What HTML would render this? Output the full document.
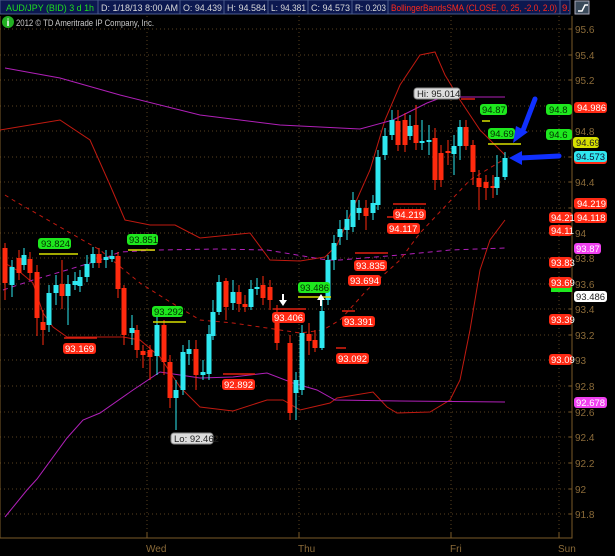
<!DOCTYPE html>
<html><head><meta charset="utf-8"><style>
html,body{margin:0;padding:0;background:#000;width:615px;height:556px;overflow:hidden}
svg{display:block;font-family:"Liberation Sans",sans-serif}
</style></head><body>
<svg width="615" height="556" viewBox="0 0 615 556" xmlns="http://www.w3.org/2000/svg">
<rect width="615" height="556" fill="#000"/>
<!-- header -->
<g font-size="9.5">
<rect x="0" y="0" width="98" height="14" fill="#0c1850" stroke="#4a5a8a" stroke-width="1"/>
<text x="6" y="11" fill="#1ee01e" textLength="88" lengthAdjust="spacingAndGlyphs">AUD/JPY (BID) 3 d 1h</text>
<rect x="98" y="0" width="82" height="14" fill="#0c1850" stroke="#4a5a8a"/>
<text x="101" y="11" fill="#d8d8d8" textLength="77" lengthAdjust="spacingAndGlyphs">D: 1/18/13 8:00 AM</text>
<rect x="180" y="0" width="44" height="14" fill="#0c1850" stroke="#4a5a8a"/>
<text x="183" y="11" fill="#d8d8d8" textLength="39" lengthAdjust="spacingAndGlyphs">O: 94.439</text>
<rect x="224" y="0" width="44" height="14" fill="#0c1850" stroke="#4a5a8a"/>
<text x="227" y="11" fill="#d8d8d8" textLength="39" lengthAdjust="spacingAndGlyphs">H: 94.584</text>
<rect x="268" y="0" width="40" height="14" fill="#0c1850" stroke="#4a5a8a"/>
<text x="271" y="11" fill="#d8d8d8" textLength="35" lengthAdjust="spacingAndGlyphs">L: 94.381</text>
<rect x="308" y="0" width="44" height="14" fill="#0c1850" stroke="#4a5a8a"/>
<text x="311" y="11" fill="#d8d8d8" textLength="39" lengthAdjust="spacingAndGlyphs">C: 94.573</text>
<rect x="352" y="0" width="36" height="14" fill="#0c1850" stroke="#4a5a8a"/>
<text x="355" y="11" fill="#d8d8d8" textLength="31" lengthAdjust="spacingAndGlyphs">R: 0.203</text>
<rect x="388" y="0" width="172" height="14" fill="#0c1850" stroke="#4a5a8a"/>
<text x="391" y="11" fill="#ff2a1a" textLength="166" lengthAdjust="spacingAndGlyphs">BollingerBandsSMA (CLOSE, 0, 25, -2.0, 2.0)</text>
<rect x="560" y="0" width="10" height="14" fill="#0c1850" stroke="#4a5a8a"/>
<text x="562" y="11" fill="#ff2a1a">9.</text>
</g>
<rect x="575" y="1" width="14" height="13" fill="#3a4a5a" stroke="#aab"/>
<path d="M578 11 L582 11 L585 5 L588 5" stroke="#fff" stroke-width="1.4" fill="none"/>
<circle cx="8" cy="22" r="6" fill="#22b022"/>
<text x="8" y="26" fill="#fff" font-size="10" font-weight="bold" text-anchor="middle">i</text>
<text x="16" y="26" fill="#c8c8c8" font-size="9" textLength="138" lengthAdjust="spacingAndGlyphs">2012 © TD Ameritrade IP Company, Inc.</text>
<!-- grid -->
<g stroke="#5a4220" stroke-width="1" stroke-dasharray="1,3">
<line x1="0" y1="29" x2="572" y2="29"/><line x1="0" y1="55" x2="572" y2="55"/><line x1="0" y1="80" x2="572" y2="80"/><line x1="0" y1="106" x2="572" y2="106"/><line x1="0" y1="131" x2="572" y2="131"/><line x1="0" y1="157" x2="572" y2="157"/><line x1="0" y1="182" x2="572" y2="182"/><line x1="0" y1="208" x2="572" y2="208"/><line x1="0" y1="233" x2="572" y2="233"/><line x1="0" y1="258" x2="572" y2="258"/><line x1="0" y1="284" x2="572" y2="284"/><line x1="0" y1="309" x2="572" y2="309"/><line x1="0" y1="335" x2="572" y2="335"/><line x1="0" y1="360" x2="572" y2="360"/><line x1="0" y1="386" x2="572" y2="386"/><line x1="0" y1="412" x2="572" y2="412"/><line x1="0" y1="437" x2="572" y2="437"/><line x1="0" y1="463" x2="572" y2="463"/><line x1="0" y1="489" x2="572" y2="489"/><line x1="0" y1="514" x2="572" y2="514"/>
<line x1="147" y1="16" x2="147" y2="538"/><line x1="299" y1="16" x2="299" y2="538"/><line x1="451" y1="16" x2="451" y2="538"/><line x1="559" y1="16" x2="559" y2="538"/>
</g>
<g stroke="#7a5a28" stroke-width="1" fill="none">
<path d="M0 16 V538 H572 V16"/>
<path d="M147 532V538M299 532V538M451 532V538M559 532V538"/>
<path d="M569 29h3M569 55h3M569 80h3M569 106h3M569 131h3M569 157h3M569 182h3M569 208h3M569 233h3M569 258h3M569 284h3M569 309h3M569 335h3M569 360h3M569 386h3M569 412h3M569 437h3M569 463h3M569 489h3M569 514h3"/>
</g>
<g fill="#8a6a38" font-size="10">
<text x="575" y="33">95.6</text><text x="575" y="59">95.4</text><text x="575" y="84">95.2</text><text x="575" y="135">94.8</text><text x="575" y="186">94.4</text><text x="575" y="237">94</text><text x="575" y="262">93.8</text><text x="575" y="288">93.6</text><text x="575" y="313">93.4</text><text x="575" y="339">93.2</text><text x="575" y="364">93</text><text x="575" y="390">92.8</text><text x="575" y="416">92.6</text><text x="575" y="441">92.4</text><text x="575" y="467">92.2</text><text x="575" y="493">92</text><text x="575" y="518">91.8</text>
<text x="146" y="552">Wed</text><text x="298" y="552">Thu</text><text x="450" y="552">Fri</text><text x="558" y="552">Sun</text>
</g>
<!-- bands -->
<g fill="none" stroke-width="1">
<path stroke="#c01a10" d="M0 130 L30 125 L60 120 L90 140 L110 185 L125 220 L150 225 L175 225 L200 238 L250 233 L270 260 L300 261 L325 257 L337 245 L350 215 L370 170 L385 120 L400 85 L420 55 L435 52 L445 75 L460 100 L480 130 L505 155"/>
<path stroke="#c01a10" d="M3 262 L20 272 L33 283 L43 313 L53 327 L67 337 L97 337 L123 337 L140 340 L160 357 L180 387 L200 407 L233 411 L267 400 L283 400 L300 410 L330 403 L337 398 L373 392 L387 407 L397 413 L430 412 L450 400 L460 380 L470 330 L480 270 L490 240 L505 220"/>
<path stroke="#b020b8" d="M5 68 L60 78 L120 95 L200 115 L280 125 L340 128 L360 129 L393 120 L427 103 L443 97 L505 97"/>
<path stroke="#b020b8" d="M5 517 L27 490 L37 479 L67 438 L83 420 L100 413 L133 390 L160 372 L200 378 L233 377 L267 373 L293 383 L317 390 L335 400 L400 401 L505 402"/>
<path stroke="#b020b8" stroke-dasharray="5,4" d="M3 290 L33 280 L67 270 L100 260 L120 252 L157 250 L217 249 L267 250 L327 260 L340 260 L400 255 L450 250 L505 248"/>
<path stroke="#c01a10" stroke-dasharray="4,4" d="M5 195 L13 200 L100 250 L140 283 L167 300 L200 320 L233 323 L267 328 L300 333 L323 330 L340 320 L367 290 L400 260 L420 233 L470 180 L503 160"/>
</g>
<!-- candles -->
<g stroke-width="1">
<path stroke="#ff2a0e" d="M5 243V300M19 250V280M30 252V280M37 265V336M43 310V345M62 260V309M99 248V268M118 252V298M124 285V345M137 325V358M143 345V368M150 345V380M164 320V375M170 355V408M196 340V390M226 278V320M239 285V312M245 295V312M263 276V305M270 280V310M277 305V350M290 335V420M309 323V355M315 330V352M366 200V230M398 110V151M405 113V152M416 105V150M435 128V190M441 145V187M448 140V165M466 120V150M473 140V185M479 170V210M486 175V200M493 175V198"/>
<path stroke="#2ee8f0" d="M12 260V297M24 248V270M49 285V332M56 275V305M68 275V325M75 272V290M80 270V292M87 255V282M93 247V268M106 250V268M112 250V262M132 315V345M157 310V375M176 380V430M183 345V395M189 340V365M203 360V380M209 325V380M213 300V340M219 275V315M233 280V310M251 280V310M257 278V295M296 372V420M302 325V395M322 300V350M328 255V305M334 235V270M340 220V245M347 210V240M353 192V232M359 200V220M373 195V220M378 150V210M385 128V160M392 110V140M410 115V140M422 120V150M429 125V155M454 135V175M460 120V160M497 155V195M505 152V180"/>
</g>
<g fill="#ff2a0e">
<rect x="2.5" y="248" width="5" height="35"/><rect x="16.5" y="258" width="5" height="15"/><rect x="27.5" y="259" width="5" height="14"/><rect x="34.5" y="272" width="5" height="46"/><rect x="40.5" y="322" width="5" height="8"/><rect x="59.5" y="284" width="5" height="12"/><rect x="96.5" y="254" width="5" height="9"/><rect x="115.5" y="256" width="5" height="33"/><rect x="121.5" y="288" width="5" height="47"/><rect x="134.5" y="330" width="5" height="20"/><rect x="140.5" y="351" width="5" height="4"/><rect x="147.5" y="350" width="5" height="7"/><rect x="161.5" y="325" width="5" height="37"/><rect x="167.5" y="362" width="5" height="36"/><rect x="193.5" y="349" width="5" height="26"/><rect x="223.5" y="281" width="5" height="26"/><rect x="236.5" y="292" width="5" height="12"/><rect x="242.5" y="304" width="5" height="3"/><rect x="260.5" y="285" width="5" height="13"/><rect x="267.5" y="287" width="5" height="13"/><rect x="274.5" y="317" width="5" height="26"/><rect x="287.5" y="343" width="5" height="70"/><rect x="306.5" y="334" width="5" height="7"/><rect x="312.5" y="340" width="5" height="8"/><rect x="363.5" y="208" width="5" height="8"/><rect x="395.5" y="121" width="5" height="24"/><rect x="402.5" y="120" width="5" height="25"/><rect x="413.5" y="125" width="5" height="18"/><rect x="432.5" y="138" width="5" height="42"/><rect x="438.5" y="153" width="5" height="27"/><rect x="445.5" y="151" width="5" height="2"/><rect x="463.5" y="127" width="5" height="19"/><rect x="470.5" y="145" width="5" height="27"/><rect x="476.5" y="178" width="5" height="9"/><rect x="483.5" y="182" width="5" height="6"/><rect x="490.5" y="186" width="5" height="2"/>
</g>
<g fill="#2ee8f0">
<rect x="9.5" y="267" width="5" height="18"/><rect x="21.5" y="255" width="5" height="10"/><rect x="46.5" y="293" width="5" height="32"/><rect x="53.5" y="285" width="5" height="8"/><rect x="65.5" y="284" width="5" height="12"/><rect x="72.5" y="281" width="5" height="4"/><rect x="77.5" y="277" width="5" height="9"/><rect x="84.5" y="264" width="5" height="13"/><rect x="90.5" y="254" width="5" height="9"/><rect x="103.5" y="257" width="5" height="3"/><rect x="109.5" y="256" width="5" height="3"/><rect x="129.5" y="328" width="5" height="5"/><rect x="154.5" y="325" width="5" height="31"/><rect x="173.5" y="390" width="5" height="8"/><rect x="180.5" y="352" width="5" height="38"/><rect x="186.5" y="349" width="5" height="5"/><rect x="200.5" y="372" width="5" height="3"/><rect x="206.5" y="334" width="5" height="40"/><rect x="210.5" y="312" width="5" height="24"/><rect x="216.5" y="282" width="5" height="30"/><rect x="230.5" y="292" width="5" height="11"/><rect x="248.5" y="289" width="5" height="18"/><rect x="254.5" y="287" width="5" height="2"/><rect x="293.5" y="380" width="5" height="13"/><rect x="299.5" y="333" width="5" height="57"/><rect x="319.5" y="311" width="5" height="37"/><rect x="325.5" y="260" width="5" height="40"/><rect x="331.5" y="243" width="5" height="17"/><rect x="337.5" y="229" width="5" height="8"/><rect x="344.5" y="219" width="5" height="11"/><rect x="350.5" y="200" width="5" height="27"/><rect x="356.5" y="208" width="5" height="5"/><rect x="370.5" y="203" width="5" height="10"/><rect x="375.5" y="157" width="5" height="48"/><rect x="382.5" y="136" width="5" height="19"/><rect x="389.5" y="120" width="5" height="15"/><rect x="407.5" y="126" width="5" height="10"/><rect x="419.5" y="141" width="5" height="2"/><rect x="426.5" y="140" width="5" height="2"/><rect x="451.5" y="146" width="5" height="8"/><rect x="457.5" y="127" width="5" height="19"/><rect x="494.5" y="177" width="5" height="11"/><rect x="502.5" y="158" width="5" height="19"/>
</g>
<!-- marker lines -->
<g stroke-width="1.5">
<path stroke="#d8e000" d="M39 254H78M128 250H155M153 322H186M298 297H331M482 121H490M488 144H521"/>
<path stroke="#e02010" d="M64 338H97M223 374H255M273 309H306M355 253H388M393 204H426M387 217H396M342 311H355M336 348H346M461 99H475"/>
</g>
<!-- labels -->
<g font-size="9.5">
<rect x="414" y="88" width="46" height="11" rx="3" fill="#ddd" stroke="#888"/><text x="417" y="97" fill="#222">Hi: 95.014</text>
<rect x="171" y="433" width="42" height="11" rx="3" fill="#ddd" stroke="#888"/><text x="174" y="442" fill="#222">Lo: 92.462</text>
<g fill="#1ee81e">
<rect x="38" y="238" width="33" height="11" rx="3"/><rect x="127" y="234" width="31" height="11" rx="3"/><rect x="152" y="306" width="31" height="11" rx="3"/><rect x="298" y="282" width="32" height="11" rx="3"/><rect x="480" y="104" width="27" height="11" rx="3"/><rect x="488" y="128" width="27" height="11" rx="3"/>
<rect x="546" y="104" width="26" height="11" rx="3"/><rect x="546" y="129" width="26" height="11" rx="3"/><rect x="551" y="286" width="21" height="6"/>
</g>
<g fill="#003000">
<text x="41" y="247">93.824</text><text x="129" y="243">93.851</text><text x="154" y="315">93.292</text><text x="300" y="291">93.486</text><text x="482" y="113">94.87</text><text x="490" y="137">94.69</text><text x="549" y="113">94.8</text><text x="549" y="138">94.6</text>
</g>
<g fill="#ff2a14">
<rect x="63" y="343" width="33" height="11" rx="3"/><rect x="222" y="379" width="33" height="11" rx="3"/><rect x="272" y="312" width="33" height="11" rx="3"/><rect x="336" y="353" width="33" height="11" rx="3"/><rect x="342" y="316" width="33" height="11" rx="3"/><rect x="348" y="275" width="33" height="11" rx="3"/><rect x="354" y="260" width="33" height="11" rx="3"/><rect x="387" y="223" width="33" height="11" rx="3"/><rect x="393" y="209" width="33" height="11" rx="3"/>
<rect x="574" y="102" width="33" height="11" rx="3"/><rect x="574" y="198" width="33" height="11" rx="3"/><rect x="574" y="212" width="33" height="11" rx="3"/>
<rect x="549" y="212" width="23" height="11" rx="3"/><rect x="549" y="225" width="23" height="11" rx="3"/><rect x="549" y="257" width="23" height="11" rx="3"/><rect x="549" y="277" width="23" height="11" rx="3"/><rect x="549" y="314" width="23" height="11" rx="3"/><rect x="549" y="354" width="23" height="11" rx="3"/>
<rect x="574" y="152" width="33" height="12" rx="3"/>
</g>
<g fill="#fff">
<text x="65" y="352">93.169</text><text x="224" y="388">92.892</text><text x="274" y="321">93.406</text><text x="338" y="362">93.092</text><text x="344" y="325">93.391</text><text x="350" y="284">93.694</text><text x="356" y="269">93.835</text><text x="389" y="232">94.117</text><text x="395" y="218">94.219</text>
<text x="577" y="111">94.986</text><text x="577" y="207">94.219</text><text x="577" y="221">94.118</text>
<text x="551" y="221">94.21</text><text x="551" y="234">94.11</text><text x="551" y="266">93.83</text><text x="551" y="286">93.69</text><text x="551" y="323">93.39</text><text x="551" y="363">93.09</text>
</g>
<rect x="573" y="137" width="26" height="11" rx="3" fill="#d8e000"/><text x="576" y="146" fill="#222">94.69</text>
<rect x="574" y="151" width="33" height="11" rx="3" fill="#30e8f0"/><text x="576" y="160" fill="#113">94.573</text>
<rect x="574" y="243" width="27" height="11" rx="3" fill="#f040f0"/><text x="576" y="252" fill="#fff">93.87</text>
<rect x="574" y="291" width="33" height="11" rx="3" fill="#fff"/><text x="576" y="300" fill="#222">93.486</text>
<rect x="574" y="397" width="33" height="11" rx="3" fill="#f040f0"/><text x="576" y="406" fill="#fff">92.678</text>
</g>
<!-- arrows -->
<g fill="#fff">
<path d="M282 294h2v6h3l-4 6-4-6h3z"/><path d="M320 306h2v-6h3l-4-6-4 6h3z"/>
</g>
<g stroke="#1030ff" stroke-width="5" stroke-linecap="round" fill="none">
<path d="M535 99 L522 133"/><path d="M559 156 L520 158"/>
</g>
<g fill="#1030ff">
<path d="M513 143 L516 126 L528 132 Z"/><path d="M509 158 L522 151 L522 165 Z"/>
</g>
</svg>
</body></html>
